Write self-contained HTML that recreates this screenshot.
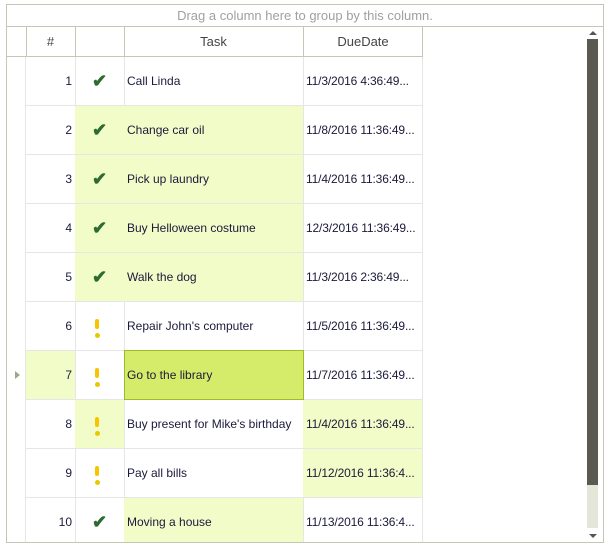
<!DOCTYPE html><html><head><style>
body{margin:0;width:609px;height:546px;background:#fff;font-family:"Segoe UI","Liberation Sans",sans-serif;font-size:12px;color:#1a1a3a;position:relative;overflow:hidden}
.a{position:absolute;box-sizing:border-box}
.c{position:absolute;box-sizing:border-box;height:49px;border-right:1px solid #e6e6e6;border-bottom:1px solid #e6e6e6;line-height:48px;white-space:nowrap;overflow:hidden}
.h{background:#f2fcc8}
.num{text-align:right;padding-right:3px}
.t{padding-left:3px}
.ck{color:#2e6b2e;font-size:18px;font-weight:bold;text-align:center}
.dd{letter-spacing:-0.15px}
</style></head><body>
<div class="a" style="left:6px;top:4px;width:598px;height:539px;border:1px solid #c6c6b6"></div>
<div class="a" style="left:7px;top:5px;width:596px;height:22px;text-align:center;color:#a0a0a0;font-size:13px;line-height:22px;border-bottom:1px solid #c6c6b6">Drag a column here to group by this column.</div>
<div class="a" style="left:7px;top:27px;width:416px;height:30px;border-bottom:1px solid #c6c6b6;border-right:1px solid #c6c6b6"></div>
<div class="a" style="left:26px;top:27px;width:1px;height:30px;background:#c6c6b6"></div>
<div class="a" style="left:75px;top:27px;width:1px;height:30px;background:#c6c6b6"></div>
<div class="a" style="left:124px;top:27px;width:1px;height:30px;background:#c6c6b6"></div>
<div class="a" style="left:303px;top:27px;width:1px;height:30px;background:#c6c6b6"></div>
<div class="a" style="left:26px;top:27px;width:49px;line-height:30px;text-align:center;font-size:13px;color:#444">#</div>
<div class="a" style="left:124px;top:27px;width:179px;line-height:30px;text-align:center;font-size:13px;color:#444">Task</div>
<div class="a" style="left:303px;top:27px;width:120px;line-height:30px;text-align:center;font-size:13px;color:#444">DueDate</div>
<div class="a" style="left:7px;top:57px;width:19px;height:485px;border-right:1px solid #e6e6e6"></div>
<div class="a" style="left:0;top:0;width:609px;height:542px;overflow:hidden"><div id="rows"></div></div>
<div class="a" style="left:587px;top:28px;width:11px;height:513px;background:#fff"></div>
<div class="a" style="left:589px;top:31px;width:0;height:0;border-left:4px solid transparent;border-right:4px solid transparent;border-bottom:4px solid #555"></div>
<div class="a" style="left:587px;top:39px;width:11px;height:446px;background:#5a5a52"></div>
<div class="a" style="left:587px;top:485px;width:11px;height:43px;background:#e4e6d8"></div>
<div class="a" style="left:589px;top:534px;width:0;height:0;border-left:4px solid transparent;border-right:4px solid transparent;border-top:4px solid #555"></div>
<script>
var d=[["Call Linda","11/3/2016 4:36:49...",1,""],["Change car oil","11/8/2016 11:36:49...",1,"it"],["Pick up laundry","11/4/2016 11:36:49...",1,"it"],["Buy Helloween costume","12/3/2016 11:36:49...",1,"it"],["Walk the dog","11/3/2016 2:36:49...",1,"it"],["Repair John's computer","11/5/2016 11:36:49...",0,""],["Go to the library","11/7/2016 11:36:49...",0,"n"],["Buy present for Mike's birthday","11/4/2016 11:36:49...",0,"id"],["Pay all bills","11/12/2016 11:36:4...",0,"d"],["Moving a house","11/13/2016 11:36:4...",1,"t"]];
var s="";d.forEach(function(r,i){var y=57+i*49,f=r[3];
s+='<div class="c num'+(f.indexOf("n")>=0?" h":"")+'" style="left:26px;top:'+y+'px;width:50px">'+(i+1)+'</div>';
s+='<div class="c ck'+(f.indexOf("i")>=0?" h":"")+'" style="left:75px;top:'+y+'px;width:50px">'+(r[2]?'✔':'<span style="display:inline-block;vertical-align:middle;width:4px;height:10px;background:#f8c400;border-radius:2px;position:relative;top:-3px"></span><span style="display:inline-block;width:5px;height:5px;border-radius:50%;background:#e8c800;position:relative;left:-4.5px;top:6px"></span>')+'</div>';
s+='<div class="c t'+(f.indexOf("t")>=0?" h":"")+'" style="left:124px;top:'+y+'px;width:180px">'+r[0]+'</div>';
s+='<div class="c dd'+(f.indexOf("d")>=0?" h":"")+'" style="left:303px;top:'+y+'px;width:120px;padding-left:3px">'+r[1]+'</div>';
if(i==6){s+='<div class="a" style="left:124px;top:'+(y-1)+'px;width:180px;height:50px;background:#d4ec6a;border:1px solid #9cbc2a;line-height:48px;padding-left:2px">Go to the library</div><div class="a" style="left:15px;top:'+(y+20)+'px;border-top:4px solid transparent;border-bottom:4px solid transparent;border-left:5px solid #a0a888"></div>';}
});document.getElementById("rows").innerHTML=s;
</script>
</body></html>
